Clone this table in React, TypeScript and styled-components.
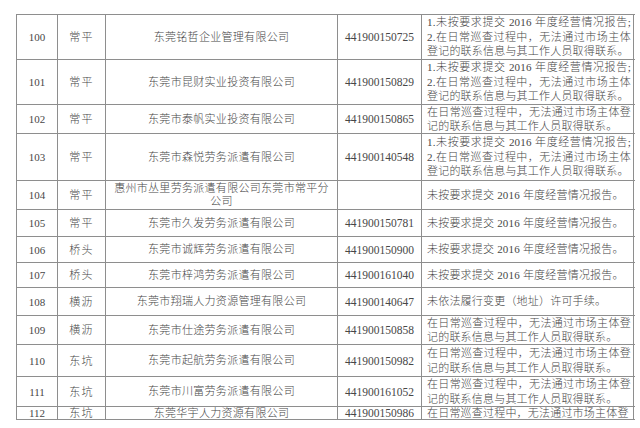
import styled, { createGlobalStyle } from "styled-components";

const GlobalStyle = createGlobalStyle`
    html, body {
        margin: 0;
        padding: 0;
        background: #fff;
    }
    body {
        font-family: "Liberation Serif", "Noto Sans CJK SC", serif;
        font-weight: 300;
        color: #474747;
    }
`

const Tabela = styled.div`
    margin: 14px 0 0 16px;
    width: 618px;
    border-top: 1px solid #8e8e8e;
    border-left: 1px solid #8e8e8e;
`
const Linha = styled.div<{ $h: number }>`
    display: grid;
    grid-template-columns: 41px 48px 232px 84px 212px;
    height: ${p => p.$h}px;
    box-sizing: border-box;
    border-bottom: 1px solid #8e8e8e;
    overflow: hidden;
`
const Celula = styled.div`
    border-right: 1px solid #8e8e8e;
    display: flex;
    align-items: center;
    justify-content: center;
    text-align: center;
    font-size: 11px;
    line-height: 14px;
    overflow: hidden;
`
const CelulaNumero = styled(Celula)`
    font-size: 11px;
`
const CelulaBairro = styled(Celula)`
    letter-spacing: 1.3px;
`
const CelulaNome = styled(Celula)`
    letter-spacing: 0.3px;
    line-height: 13px;
`
const CelulaCodigo = styled(Celula)`
    font-size: 11.5px;
`
const CelulaMotivo = styled(Celula)`
    flex-direction: column;
    align-items: stretch;
    justify-content: center;
    padding: 0 2px 0 5px;
    text-align: left;
    letter-spacing: 0.2px;
    line-height: 14.5px;
`
const LinhaMotivo = styled.div<{ $cheia: boolean }>`
    text-align: ${p => (p.$cheia ? "justify" : "left")};
    text-align-last: ${p => (p.$cheia ? "justify" : "auto")};
`

const tresLinhas = [
    "1.未按要求提交 2016 年度经营情况报告;",
    "2.在日常巡查过程中，无法通过市场主体",
    "登记的联系信息与其工作人员取得联系。",
]
const duasLinhas = [
    "在日常巡查过程中，无法通过市场主体登",
    "记的联系信息与其工作人员取得联系。",
]
const relatorio = ["未按要求提交 2016 年度经营情况报告。"]
const endereco = ["未依法履行变更（地址）许可手续。"]

type Empresa = {
    num: string
    bairro: string
    nome: string[]
    codigo: string
    motivo: string[]
    h: number
}

const empresas: Empresa[] = [
    { num: "100", bairro: "常平", nome: ["东莞铭哲企业管理有限公司"], codigo: "441900150725", motivo: tresLinhas, h: 45 },
    { num: "101", bairro: "常平", nome: ["东莞市昆财实业投资有限公司"], codigo: "441900150829", motivo: tresLinhas, h: 45 },
    { num: "102", bairro: "常平", nome: ["东莞市泰帆实业投资有限公司"], codigo: "441900150865", motivo: duasLinhas, h: 29 },
    { num: "103", bairro: "常平", nome: ["东莞市森悦劳务派遣有限公司"], codigo: "441900140548", motivo: tresLinhas, h: 47 },
    { num: "104", bairro: "常平", nome: ["惠州市丛里劳务派遣有限公司东莞市常平分", "公司"], codigo: "", motivo: relatorio, h: 29 },
    { num: "105", bairro: "常平", nome: ["东莞市久发劳务派遣有限公司"], codigo: "441900150781", motivo: relatorio, h: 27 },
    { num: "106", bairro: "桥头", nome: ["东莞市诚辉劳务派遣有限公司"], codigo: "441900150900", motivo: relatorio, h: 26 },
    { num: "107", bairro: "桥头", nome: ["东莞市梓鸿劳务派遣有限公司"], codigo: "441900161040", motivo: relatorio, h: 25 },
    { num: "108", bairro: "横沥", nome: ["东莞市翔瑞人力资源管理有限公司"], codigo: "441900140647", motivo: endereco, h: 28 },
    { num: "109", bairro: "横沥", nome: ["东莞市仕途劳务派遣有限公司"], codigo: "441900150858", motivo: duasLinhas, h: 29 },
    { num: "110", bairro: "东坑", nome: ["东莞市起航劳务派遣有限公司"], codigo: "441900150982", motivo: duasLinhas, h: 32 },
    { num: "111", bairro: "东坑", nome: ["东莞市川富劳务派遣有限公司"], codigo: "441900161052", motivo: duasLinhas, h: 30 },
    { num: "112", bairro: "东坑", nome: ["东莞华宇人力资源有限公司"], codigo: "441900150986", motivo: [duasLinhas[0]], h: 13 },
]

export default function App() {
    return (
        <>
            <GlobalStyle />
            <Tabela>
                {empresas.map(e => (
                    <Linha key={e.num} $h={e.h}>
                        <CelulaNumero>{e.num}</CelulaNumero>
                        <CelulaBairro>{e.bairro}</CelulaBairro>
                        <CelulaNome>
                            <div>
                                {e.nome.map((parte, i) => (
                                    <div key={i}>{parte}</div>
                                ))}
                            </div>
                        </CelulaNome>
                        <CelulaCodigo>{e.codigo}</CelulaCodigo>
                        <CelulaMotivo>
                            {e.motivo.map((linha, i) => (
                                <LinhaMotivo key={i} $cheia={e.motivo.length > 1 && i < e.motivo.length - 1}>
                                    {linha}
                                </LinhaMotivo>
                            ))}
                        </CelulaMotivo>
                    </Linha>
                ))}
            </Tabela>
        </>
    )
}
